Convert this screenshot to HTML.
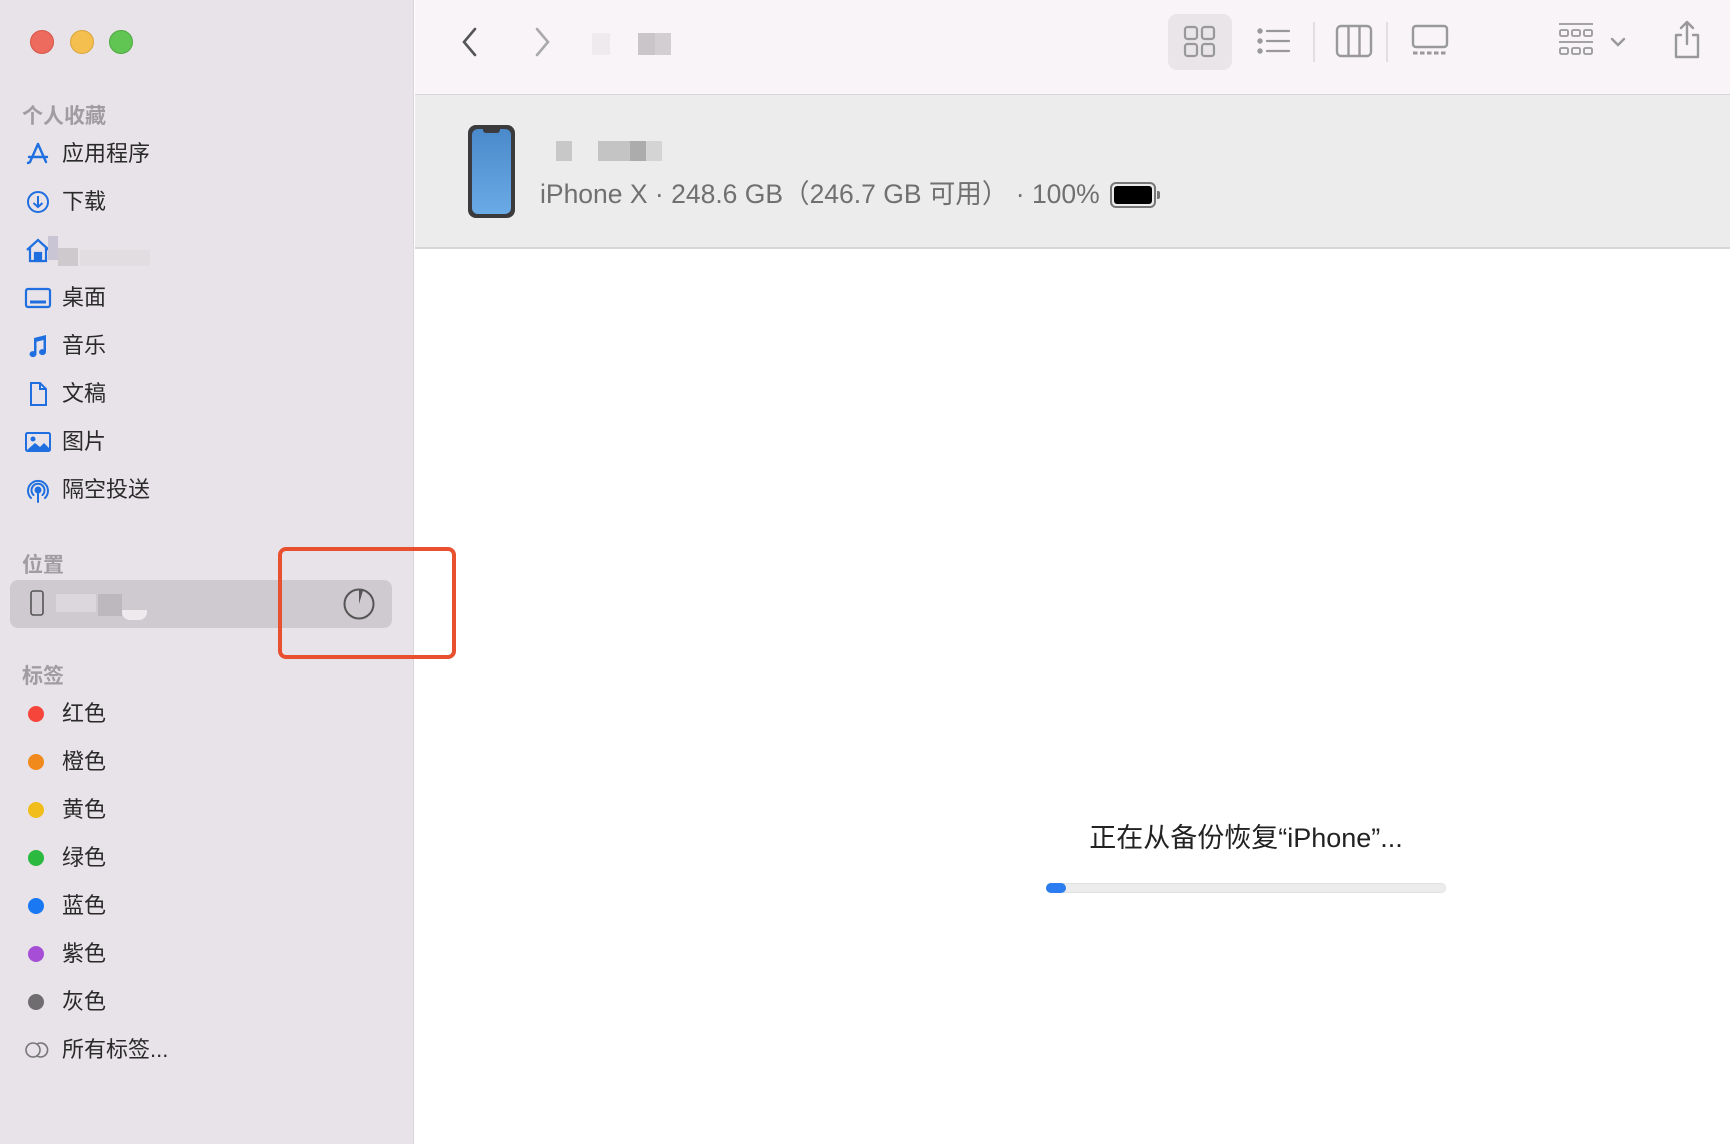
<!DOCTYPE html>
<html><head><meta charset="utf-8"><style>
*{margin:0;padding:0;box-sizing:border-box}
body{width:1730px;height:1144px;position:relative;overflow:hidden;background:#fff;font-family:"Liberation Sans","Noto Sans CJK SC",sans-serif}
.a{position:absolute}
#side{left:0;top:0;width:414px;height:1144px;background:#e8e3e8;border-right:1px solid #d8d4d8}
.dot{width:24px;height:24px;border-radius:50%;top:30px}
.sec{left:22px;font-size:21px;color:#a19ca1;font-weight:bold}
.it{left:62px;font-size:22px;color:#2a2a2a;line-height:30px}
.ic{left:24px;width:28px;height:28px}
.tag{left:28px;width:16px;height:16px;border-radius:50%}
#tb{left:415px;top:0;width:1315px;height:95px;background:#f8f4f8;border-bottom:1px solid #d9d6d9}
#dh{left:415px;top:95px;width:1315px;height:154px;background:#ececec;border-bottom:2px solid #d6d6d6}
</style></head><body>
<div id="side" class="a">
<div class="a dot" style="left:30px;background:#ec6a5e;border:1px solid #d45548"></div>
<div class="a dot" style="left:70px;background:#f4bf4f;border:1px solid #d9a53a"></div>
<div class="a dot" style="left:109px;background:#61c554;border:1px solid #4ea840"></div>

<div class="a sec" style="top:100px">个人收藏</div>
<svg class="a ic" style="top:140px" viewBox="0 0 28 28" fill="none" stroke="#1f6fe0" stroke-width="2.4" stroke-linecap="round"><path d="M14 4 L6 22 M14 4 L22 22 M5 17 H23 M4 23 L6 22"/></svg>
<div class="a it" style="top:139px">应用程序</div>
<svg class="a ic" style="top:188px" viewBox="0 0 28 28" fill="none" stroke="#1f6fe0" stroke-width="2"><circle cx="14" cy="14" r="10"/><path d="M14 8 V19 M9.5 15 L14 19 L18.5 15"/></svg>
<div class="a it" style="top:187px">下载</div>
<svg class="a ic" style="top:236px" viewBox="0 0 28 28" fill="none" stroke="#1f6fe0" stroke-width="2.2"><path d="M3 14 L14 4 L25 14 M6 12 V25 H22 V12"/><rect x="11" y="17" width="6" height="8" fill="#1f6fe0"/></svg>
<div class="a" style="left:48px;top:236px;width:10px;height:24px;background:#c9c5d4"></div>
<div class="a" style="left:58px;top:248px;width:20px;height:18px;background:#cdc9cd"></div>
<div class="a" style="left:80px;top:250px;width:70px;height:16px;background:#e1dde1"></div>
<svg class="a ic" style="top:284px" viewBox="0 0 28 28" fill="none" stroke="#1f6fe0" stroke-width="2.2"><rect x="2" y="5" width="24" height="18" rx="2"/><path d="M6 18 H22" stroke-width="3"/></svg>
<div class="a it" style="top:283px">桌面</div>
<svg class="a ic" style="top:332px" viewBox="0 0 28 28" fill="#1f6fe0"><path d="M10 6 L22 3 V20 A3.5 3 0 1 1 19.5 17.2 V8 L12.5 9.8 V22 A3.5 3 0 1 1 10 19.2 Z"/></svg>
<div class="a it" style="top:331px">音乐</div>
<svg class="a ic" style="top:380px" viewBox="0 0 28 28" fill="none" stroke="#1f6fe0" stroke-width="2"><path d="M7 3 H16 L22 9 V25 H7 Z M16 3 V9 H22"/></svg>
<div class="a it" style="top:379px">文稿</div>
<svg class="a ic" style="top:428px" viewBox="0 0 28 28"><rect x="2" y="5" width="24" height="18" rx="1.5" fill="none" stroke="#1f6fe0" stroke-width="2"/><circle cx="9" cy="11" r="2.5" fill="#1f6fe0"/><path d="M3 22 L11 15 L16 19 L20 15 L25 20 V22Z" fill="#1f6fe0"/></svg>
<div class="a it" style="top:427px">图片</div>
<svg class="a ic" style="top:476px" viewBox="0 0 28 28" fill="none" stroke="#1f6fe0" stroke-width="2" stroke-linecap="round"><path d="M7 22 A10 10 0 1 1 21 22 M9.5 19 A6.5 6.5 0 1 1 18.5 19"/><circle cx="14" cy="14" r="2.5" fill="#1f6fe0"/><path d="M14 17 V26"/></svg>
<div class="a it" style="top:475px">隔空投送</div>

<div class="a sec" style="top:549px">位置</div>
<div class="a" style="left:10px;top:580px;width:382px;height:48px;background:#cfcacf;border-radius:8px"></div>
<svg class="a" style="left:29px;top:590px" width="16" height="26" viewBox="0 0 16 26" fill="none" stroke="#555" stroke-width="1.6"><rect x="2" y="1" width="12" height="24" rx="2.5"/></svg>
<div class="a" style="left:56px;top:594px;width:40px;height:18px;background:#dcd7dc"></div>
<div class="a" style="left:98px;top:594px;width:24px;height:22px;background:#bdb8bd"></div>
<div class="a" style="left:122px;top:610px;width:25px;height:10px;background:#eeeaee;border-radius:0 0 8px 8px"></div>
<svg class="a" style="left:342px;top:587px" width="34" height="34" viewBox="0 0 34 34"><circle cx="17" cy="17" r="14.5" fill="none" stroke="#555" stroke-width="2"/><path d="M17 17 V3 A14 14 0 0 1 21 3.5 Z" fill="#555"/></svg>
<div class="a" style="left:278px;top:547px;width:178px;height:112px;border:4px solid #e8502f;border-radius:8px"></div>

<div class="a sec" style="top:660px">标签</div>
<div class="a tag" style="top:706px;background:#f6453b"></div><div class="a it" style="top:699px">红色</div>
<div class="a tag" style="top:754px;background:#f18a1c"></div><div class="a it" style="top:747px">橙色</div>
<div class="a tag" style="top:802px;background:#f0bd1a"></div><div class="a it" style="top:795px">黄色</div>
<div class="a tag" style="top:850px;background:#2bba3f"></div><div class="a it" style="top:843px">绿色</div>
<div class="a tag" style="top:898px;background:#1a78f2"></div><div class="a it" style="top:891px">蓝色</div>
<div class="a tag" style="top:946px;background:#a64fd6"></div><div class="a it" style="top:939px">紫色</div>
<div class="a tag" style="top:994px;background:#6f6d70"></div><div class="a it" style="top:987px">灰色</div>
<svg class="a" style="left:24px;top:1040px" width="26" height="20" viewBox="0 0 26 20" fill="none" stroke="#777" stroke-width="1.6"><circle cx="9" cy="10" r="7"/><path d="M13 4 A7 7 0 1 1 13 16"/></svg>
<div class="a it" style="top:1035px">所有标签...</div>
</div>

<div id="tb" class="a">
<svg class="a" style="left:45px;top:26px" width="20" height="32" viewBox="0 0 20 32" fill="none" stroke="#555" stroke-width="2.6" stroke-linecap="round"><path d="M15 3 L4 16 L15 29"/></svg>
<svg class="a" style="left:117px;top:26px" width="20" height="32" viewBox="0 0 20 32" fill="none" stroke="#aaa" stroke-width="2.6" stroke-linecap="round"><path d="M5 3 L16 16 L5 29"/></svg>
<div class="a" style="left:177px;top:33px;width:18px;height:22px;background:#eeeaee"></div>
<div class="a" style="left:223px;top:33px;width:33px;height:22px;background:#c9c5c9"></div>
<div class="a" style="left:240px;top:33px;width:16px;height:22px;background:#d2ced2"></div>
<div class="a" style="left:753px;top:14px;width:64px;height:56px;background:#e9e5e9;border-radius:9px"></div>
<svg class="a" style="left:768px;top:25px" width="34" height="34" viewBox="0 0 34 34" fill="none" stroke="#999" stroke-width="2.2"><rect x="2" y="2" width="12" height="12" rx="2.5"/><rect x="19" y="2" width="12" height="12" rx="2.5"/><rect x="2" y="19" width="12" height="12" rx="2.5"/><rect x="19" y="19" width="12" height="12" rx="2.5"/></svg>
<svg class="a" style="left:842px;top:26px" width="34" height="30" viewBox="0 0 34 30" stroke="#999" stroke-width="2.2" stroke-linecap="round"><circle cx="3" cy="5" r="1.6" fill="#999"/><circle cx="3" cy="15" r="1.6" fill="#999"/><circle cx="3" cy="25" r="1.6" fill="#999"/><path d="M10 5 H32 M10 15 H32 M10 25 H32"/></svg>
<div class="a" style="left:898px;top:22px;width:2px;height:40px;background:#e2dee2"></div>
<svg class="a" style="left:920px;top:24px" width="38" height="34" viewBox="0 0 38 34" fill="none" stroke="#999" stroke-width="2.4"><rect x="2" y="2" width="34" height="30" rx="4"/><path d="M13.5 2 V32 M24.5 2 V32"/></svg>
<div class="a" style="left:971px;top:22px;width:2px;height:40px;background:#e2dee2"></div>
<svg class="a" style="left:996px;top:24px" width="38" height="32" viewBox="0 0 38 32" fill="none" stroke="#999" stroke-width="2.4"><rect x="2" y="2" width="34" height="21" rx="3"/><path d="M2 29 H36" stroke-dasharray="4.5 2.5" stroke-width="3"/></svg>
<svg class="a" style="left:1143px;top:22px" width="36" height="36" viewBox="0 0 36 36" fill="none" stroke="#999" stroke-width="1.8"><path d="M1 2 H35 M1 20 H35"/><rect x="2" y="8" width="8" height="6" rx="1.5"/><rect x="14" y="8" width="8" height="6" rx="1.5"/><rect x="26" y="8" width="8" height="6" rx="1.5"/><rect x="2" y="26" width="8" height="6" rx="1.5"/><rect x="14" y="26" width="8" height="6" rx="1.5"/><rect x="26" y="26" width="8" height="6" rx="1.5"/></svg>
<svg class="a" style="left:1195px;top:36px" width="16" height="12" viewBox="0 0 16 12" fill="none" stroke="#999" stroke-width="2.4" stroke-linecap="round"><path d="M2 3 L8 9 L14 3"/></svg>
<svg class="a" style="left:1256px;top:20px" width="32" height="40" viewBox="0 0 32 40" fill="none" stroke="#999" stroke-width="2.4" stroke-linecap="round" stroke-linejoin="round"><path d="M10 15 H5 V37 H27 V15 H22 M16 2 V24 M10 8 L16 2 L22 8"/></svg>
</div>

<div id="dh" class="a">
<div class="a" style="left:53px;top:30px;width:47px;height:93px;border-radius:8px;background:#3b3b3d"></div>
<div class="a" style="left:57px;top:34px;width:39px;height:85px;border-radius:6px;background:linear-gradient(#4a8acb,#6aaae6)"></div>
<div class="a" style="left:68px;top:34px;width:17px;height:4px;border-radius:0 0 3px 3px;background:#3b3b3d"></div>
<div class="a" style="left:141px;top:46px;width:16px;height:20px;background:#c8c8c8"></div>
<div class="a" style="left:183px;top:46px;width:32px;height:20px;background:#c4c4c4"></div>
<div class="a" style="left:215px;top:46px;width:16px;height:20px;background:#acacac"></div>
<div class="a" style="left:231px;top:46px;width:16px;height:20px;background:#d4d4d4"></div>
<div class="a" style="left:125px;top:84px;font-size:26.5px;color:#707070;line-height:30px;white-space:nowrap">iPhone X · 248.6 GB（246.7 GB 可用） · 100%</div>
<div class="a" style="left:695px;top:87px;width:46px;height:26px;border:2px solid #777;border-radius:6px;padding:2px"><div style="width:100%;height:100%;background:#000;border-radius:3px"></div></div>
<div class="a" style="left:742px;top:96px;width:3px;height:8px;background:#777;border-radius:0 2px 2px 0"></div>
</div>

<div class="a" style="left:996px;top:820px;width:500px;text-align:center;font-size:27px;color:#222;line-height:36px;white-space:nowrap">正在从备份恢复“iPhone”...</div>
<div class="a" style="left:1046px;top:883px;width:400px;height:10px;background:#ececec;border-radius:5px;border:1px solid #e0e0e0"></div>
<div class="a" style="left:1046px;top:883px;width:20px;height:10px;background:#2b7cf0;border-radius:5px"></div>
</body></html>
